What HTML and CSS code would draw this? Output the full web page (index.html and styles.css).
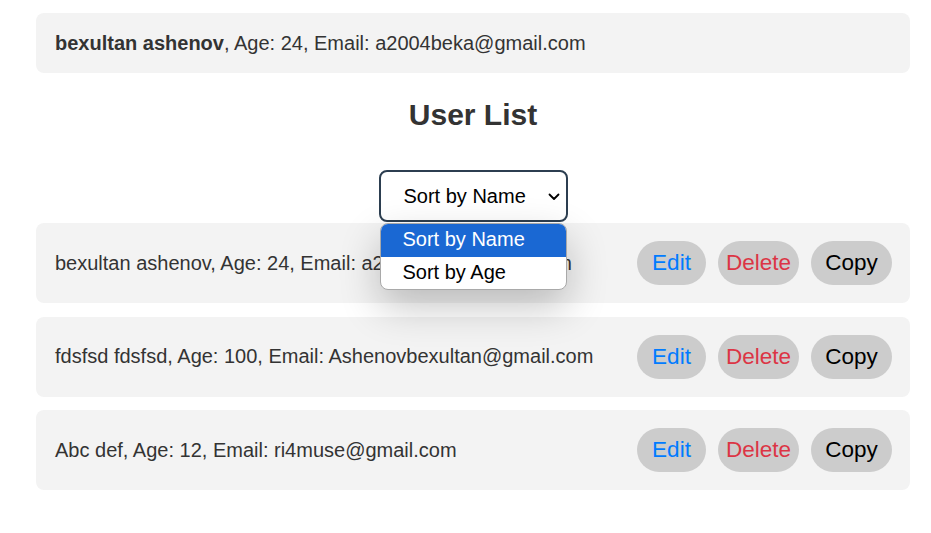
FILE: index.html
```html
<!DOCTYPE html>
<html lang="en">
<head>
<meta charset="utf-8">
<title>User List</title>
<link rel="stylesheet" href="styles.css">
</head>
<body>
<div class="container">
  <div class="card top-card"><strong>bexultan ashenov</strong>, Age: 24, Email: a2004beka@gmail.com</div>
  <h2 class="title">User List</h2>
  <div class="sort-wrap">
    <div class="sort-box">
      <select class="sort-select">
        <option>Sort by Name</option>
        <option>Sort by Age</option>
      </select>
      <svg class="chevron" width="12" height="8" viewBox="0 0 12 8"><path d="M1.5 1.5 L6 6 L10.5 1.5" fill="none" stroke="#000" stroke-width="1.8" stroke-linecap="round" stroke-linejoin="round"/></svg>
      <div class="menu">
        <div class="menu-item active">Sort by Name</div>
        <div class="menu-item">Sort by Age</div>
      </div>
    </div>
  </div>
  <ul class="list">
    <li class="card row">
      <span class="info">bexultan ashenov, Age: 24, Email: a2004beka@gmail.com</span>
      <div class="actions">
        <button class="btn edit">Edit</button>
        <button class="btn del">Delete</button>
        <button class="btn copy">Copy</button>
      </div>
    </li>
    <li class="card row">
      <span class="info">fdsfsd fdsfsd, Age: 100, Email: Ashenovbexultan@gmail.com</span>
      <div class="actions">
        <button class="btn edit">Edit</button>
        <button class="btn del">Delete</button>
        <button class="btn copy">Copy</button>
      </div>
    </li>
    <li class="card row">
      <span class="info">Abc def, Age: 12, Email: ri4muse@gmail.com</span>
      <div class="actions">
        <button class="btn edit">Edit</button>
        <button class="btn del">Delete</button>
        <button class="btn copy">Copy</button>
      </div>
    </li>
  </ul>
</div>
</body>
</html>
```

FILE: styles.css
```css
* { box-sizing: border-box; }
html, body {
  margin: 0;
  padding: 0;
  background: #fff;
}
body {
  font-family: "Liberation Sans", Arial, sans-serif;
  color: #333;
}
.container {
  width: 874px;
  margin: 0 0 0 36px;
  padding-top: 13px;
}
.card {
  background: #f3f3f3;
  border-radius: 8px;
}
.top-card {
  height: 60px;
  padding: 0 19px;
  display: flex;
  align-items: center;
  font-size: 20px;
}
.top-card strong { white-space: pre; }
.title {
  margin: 24px 0 0;
  height: 35px;
  font-size: 30px;
  line-height: 35px;
  text-align: center;
  color: #333;
  font-weight: bold;
}
.sort-wrap {
  display: flex;
  justify-content: center;
  margin-top: 38px;
  position: relative;
  z-index: 5;
}
.sort-box {
  position: relative;
  width: 189px;
  height: 52px;
}
.sort-select {
  -webkit-appearance: none;
  appearance: none;
  width: 189px;
  height: 52px;
  border: 2px solid #2c3e50;
  border-radius: 8px;
  background: #fff;
  padding: 0 0 0 23px;
  font-family: "Liberation Sans", Arial, sans-serif;
  font-size: 20px;
  color: #000;
  outline: none;
}
.chevron {
  position: absolute;
  right: 8px;
  top: 23px;
  pointer-events: none;
}
.menu {
  position: absolute;
  left: 1px;
  top: 53px;
  width: 187px;
  height: 67px;
  background: #fff;
  border: 1px solid #a9a9a9;
  border-radius: 8px;
  overflow: hidden;
  box-shadow: 0 16px 40px rgba(0, 0, 0, 0.24);
}
.menu-item {
  height: 33px;
  line-height: 31px;
  padding-left: 22px;
  font-size: 20px;
  color: #000;
}
.menu-item.active {
  background: #1a68d3;
  color: #fff;
}
.list {
  list-style: none;
  margin: 1px 0 0;
  padding: 0;
  display: flex;
  flex-direction: column;
  gap: 13.5px;
}
.row {
  height: 80px;
  padding: 0 18px 0 19px;
  display: flex;
  align-items: center;
  justify-content: space-between;
}
.info {
  font-size: 20px;
  color: #333;
}
.actions {
  display: flex;
  gap: 12px;
}
.btn {
  height: 44px;
  border: none;
  border-radius: 22px;
  background: #cccccc;
  font-family: "Liberation Sans", Arial, sans-serif;
  font-size: 22.5px;
  padding: 0;
  cursor: pointer;
}
.btn.edit { width: 69px; color: #007bff; }
.btn.del { width: 81px; color: #dc3545; }
.btn.copy { width: 81px; color: #000; }
```
